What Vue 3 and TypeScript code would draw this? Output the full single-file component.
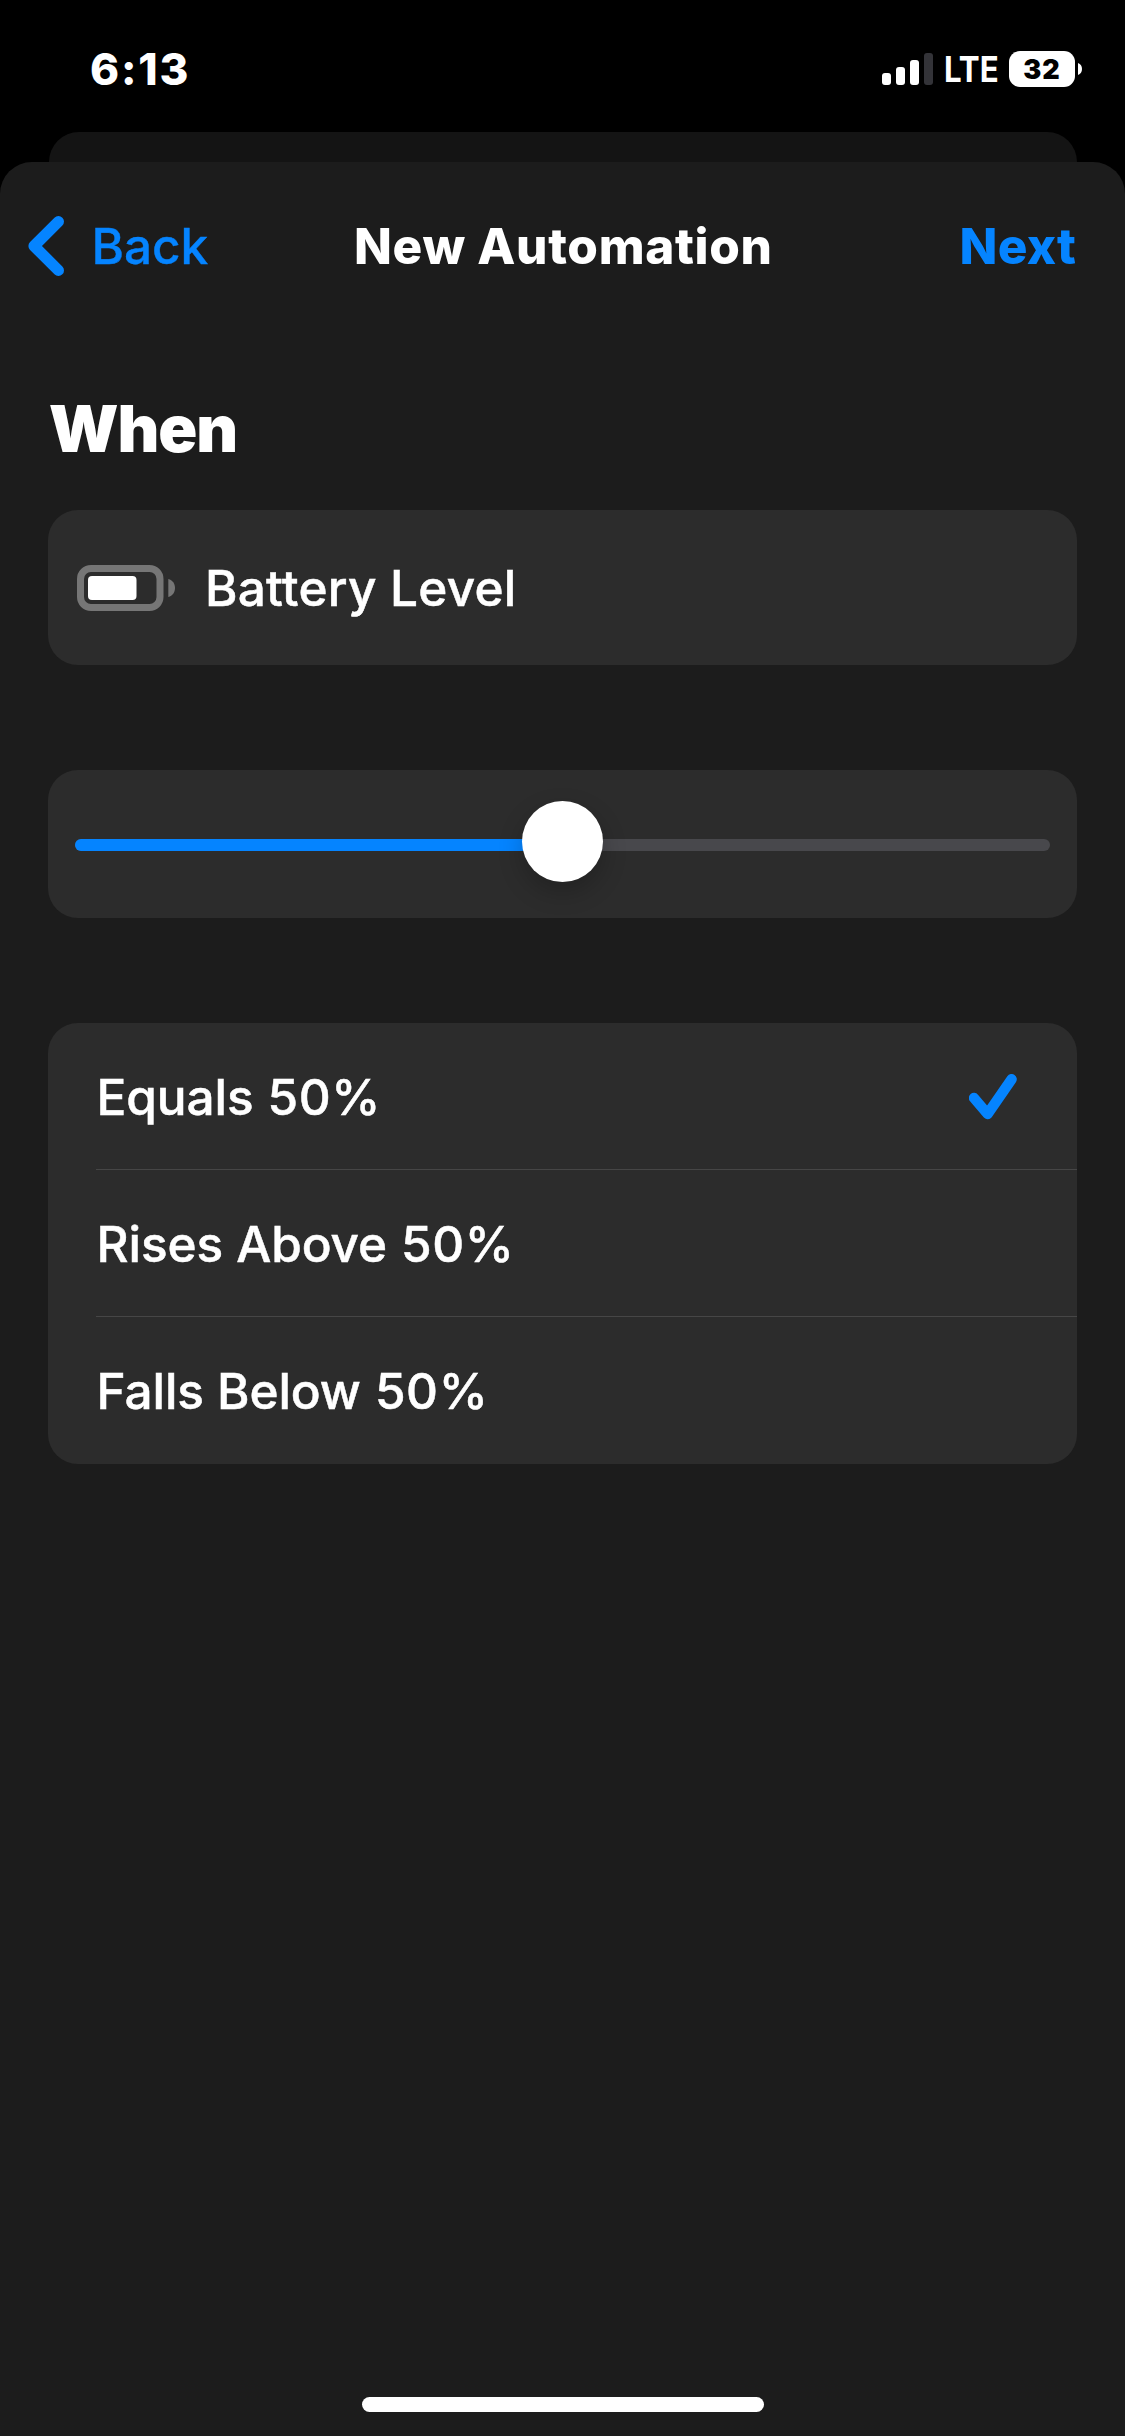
<script setup lang="ts">
import { ref } from 'vue'

interface Condition {
  id: string
  label: string
}

const level = ref(50)
const conditions: Condition[] = [
  { id: 'equals', label: 'Equals' },
  { id: 'rises', label: 'Rises Above' },
  { id: 'falls', label: 'Falls Below' },
]
const selected = ref('equals')
</script>

<template>
  <div class="screen">
    <header class="status">
      <span class="time">6:13</span>
      <svg class="signal" viewBox="0 0 51 32" width="51" height="32">
        <rect x="0" y="20" width="9" height="12" rx="3" fill="#fff" />
        <rect x="14" y="14" width="9" height="18" rx="3" fill="#fff" />
        <rect x="28" y="7" width="9" height="25" rx="3" fill="#fff" />
        <rect x="42" y="0" width="9" height="32" rx="3" fill="#333338" />
      </svg>
      <span class="network">LTE</span>
      <span class="charge">32</span>
      <svg class="nub" viewBox="0 0 4 12" width="4" height="12">
        <path d="M0 0C2.6 1 4 3.3 4 6S2.6 11 0 12Z" fill="#fff" />
      </svg>
    </header>
    <div class="backdrop"></div>
    <main class="sheet">
      <nav class="nav">
        <a class="back">
          <svg viewBox="0 0 36 60" width="36" height="60">
            <path d="M30.4 5.6L6 30L30.4 54.4" fill="none" stroke="#0584ff" stroke-width="11.2" stroke-linecap="round" stroke-linejoin="round" />
          </svg>
          <span>Back</span>
        </a>
        <h1>New Automation</h1>
        <a class="next">Next</a>
      </nav>
      <h2>When</h2>
      <section class="card trigger">
        <svg viewBox="0 0 98 46" width="98" height="46">
          <rect x="3.5" y="3.5" width="79.5" height="39" rx="10.5" fill="none" stroke="#767676" stroke-width="7" />
          <rect x="11" y="11" width="48.5" height="24" rx="4" fill="#fff" />
          <path d="M91.3 14C95.5 15 98 18.6 98 23S95.5 31 91.3 32Z" fill="#767676" />
        </svg>
        <span>Battery Level</span>
      </section>
      <section class="card slider">
        <div class="track">
          <div class="filled" :style="{ width: level + '%' }"></div>
          <div class="knob" :style="{ left: level + '%' }"></div>
        </div>
      </section>
      <section class="card">
        <div v-for="c in conditions" :key="c.id" class="row" @click="selected = c.id">
          <span class="label">{{ c.label }} <span class="value">{{ level }}%</span></span>
          <svg v-if="c.id === selected" viewBox="0 0 48 46" width="48" height="46">
            <path d="M5 24L18.6 40L42.6 5.2" fill="none" stroke="#0584ff" stroke-width="10.4" stroke-linecap="round" stroke-linejoin="round" />
          </svg>
        </div>
      </section>
      <div class="home"></div>
    </main>
  </div>
</template>

<style>
body {
  background: #000;
}
</style>

<style scoped>
.screen {
  display: flex;
  flex-direction: column;
  width: 1125px;
  height: 2436px;
  overflow: hidden;
  background: #000;
  color: #fff;
  font-family: Inter, "Liberation Sans", sans-serif;
}
.status {
  display: flex;
  flex: none;
  align-items: flex-start;
  height: 132px;
}
.time {
  width: 792px;
  margin: 39px 0 0 90px;
  font-size: 44px;
  line-height: 60px;
  font-weight: 800;
  letter-spacing: 1.8px;
}
.signal {
  margin-top: 53px;
}
.network {
  width: 65px;
  margin: 50px 0 0 11px;
  font-size: 35.5px;
  line-height: 40px;
  font-weight: 700;
  transform: scaleX(0.88);
  transform-origin: left;
}
.charge {
  width: 66px;
  height: 36px;
  margin-top: 51px;
  border-radius: 11px;
  background: #fff;
  color: #000;
  text-align: center;
  font-size: 27px;
  line-height: 37px;
  font-weight: 900;
  letter-spacing: 1px;
}
.nub {
  margin: 63px 0 0 3px;
}
.backdrop {
  flex: none;
  height: 30px;
  margin: 0 48px 0 49px;
  background: #141414;
  border-radius: 30px 30px 0 0;
}
.sheet {
  display: flex;
  flex-direction: column;
  flex: 1;
  background: #1c1c1c;
  border-radius: 32px 32px 0 0;
}
.nav {
  display: flex;
  align-items: center;
  height: 168px;
  font-size: 49.5px;
  line-height: 60px;
  white-space: nowrap;
}
.back {
  display: flex;
  align-items: center;
  gap: 27.5px;
  width: 326px;
  margin-left: 28px;
  color: #0584ff;
  font-weight: 500;
  letter-spacing: -0.1px;
  -webkit-text-stroke: 0.4px #0584ff;
}
h1 {
  width: 605.5px;
  margin: 0;
  font-size: inherit;
  font-weight: 800;
  letter-spacing: 0.68px;
}
.next {
  color: #0584ff;
  font-weight: 800;
  letter-spacing: 0.3px;
}
h2 {
  margin: 59px 0 0 48.7px;
  font-size: 64.5px;
  line-height: 80px;
  font-weight: 900;
  letter-spacing: -1.1px;
}
.card {
  margin: 0 48px 105px;
  background: #2c2c2c;
  border-radius: 30px;
  font-size: 49.5px;
  font-weight: 500;
  letter-spacing: 0.25px;
  -webkit-text-stroke: 0.5px #fff;
}
.trigger {
  display: flex;
  align-items: center;
  gap: 30px;
  height: 155px;
  margin-top: 41px;
  padding-left: 29px;
  box-sizing: border-box;
}
.slider {
  height: 148px;
  padding: 69px 27px 0;
  box-sizing: border-box;
}
.track {
  position: relative;
  height: 12px;
  border-radius: 6px;
  background: #48484c;
}
.filled {
  height: 12px;
  border-radius: 6px;
  background: #0584ff;
}
.knob {
  position: absolute;
  top: -38px;
  width: 81px;
  height: 81px;
  margin-left: -40.5px;
  border-radius: 50%;
  background: #fff;
  box-shadow: 0 10px 24px rgba(0, 0, 0, 0.22);
}
.row {
  display: flex;
  align-items: center;
  justify-content: space-between;
  height: 147px;
  margin-left: 48px;
  padding: 1px 60px 0 0.5px;
  box-sizing: border-box;
  border-bottom: 1px solid #464646;
}
.row:last-child {
  border-bottom: 0;
}
.label {
  letter-spacing: -0.08px;
}
.value {
  margin-left: 1px;
  letter-spacing: 0.6px;
}
.home {
  width: 402px;
  height: 15px;
  margin: auto auto 24px;
  border-radius: 8px;
  background: #fff;
}
</style>
